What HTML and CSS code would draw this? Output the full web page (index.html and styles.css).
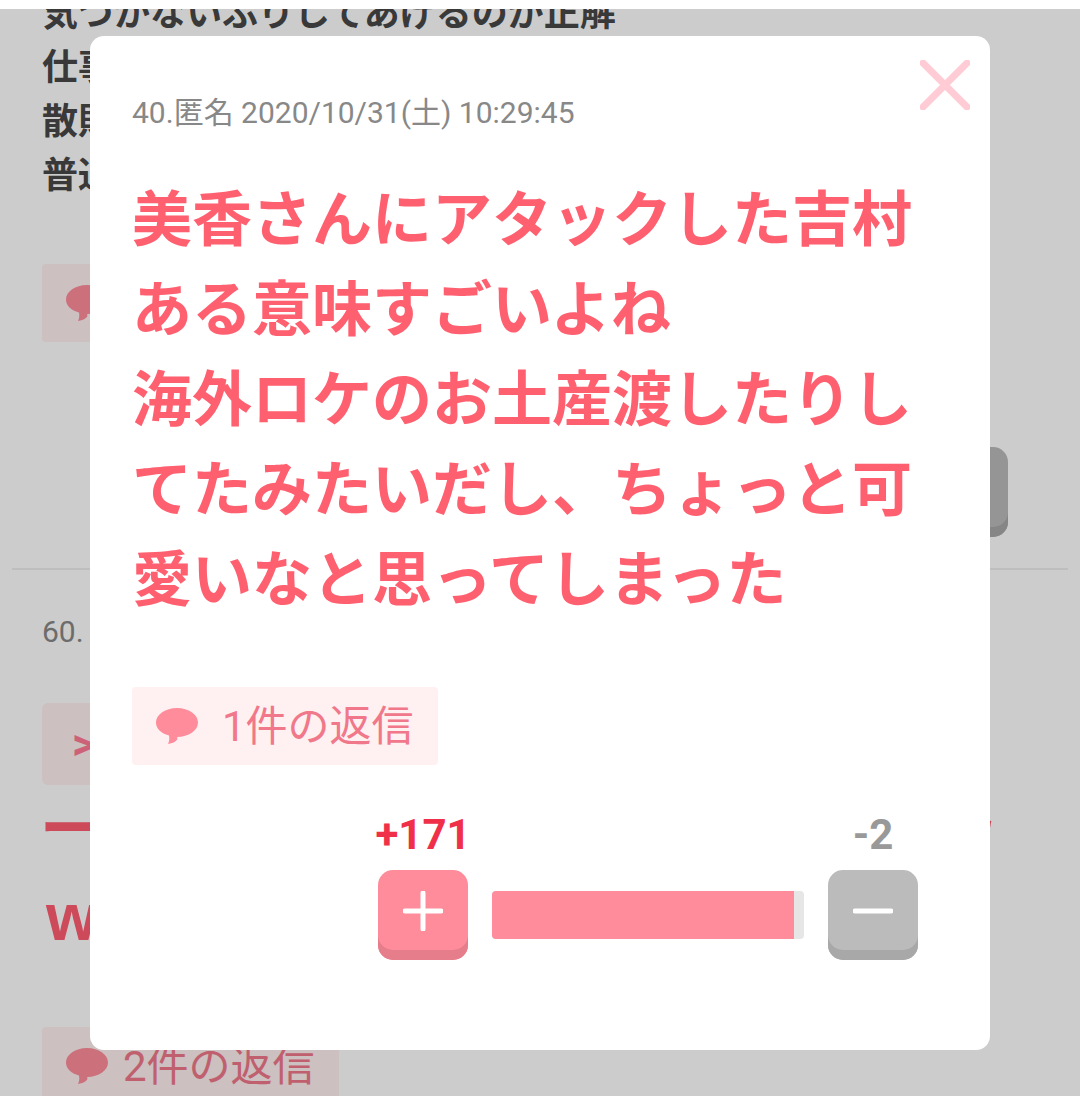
FILE: index.html
```html
<!DOCTYPE html>
<html lang="ja">
<head>
    <meta charset="UTF-8">
    <meta name="viewport" content="width=device-width, initial-scale=1.0">
    <title>コメント</title>
    <link rel="stylesheet" href="styles.css">
</head>
<body>
    <div class="top-bar"></div>

    <div class="main">
        <div class="page">
            <div class="comment first-comment">
                <p class="comment-text">気づかないふりしてあげるのが正解<br>仕事<br>散財<br>普通</p>
                <div class="reply-chip">
                    <svg class="bubble" viewBox="0 0 42 36"><path d="M21 0C32.6 0 42 6.500 42 14.500C42 22.500 32.600 29 21 29C23 32 18 35 12 36C13.500 33 13.500 30 13 27.500C5 25.500 0 20.500 0 14.500C0 6.500 9.400 0 21 0Z"/></svg>
                    <span>1件の返信</span>
                </div>
                <div class="votes">
                    <div class="vote">
                        <div class="vote-count minus-count">-4</div>
                        <div class="vote-btn minus-btn"></div>
                    </div>
                </div>
            </div>

            <div class="comment second-comment">
                <div class="comment-meta">60. 匿名 2020/10/31(土) 10:41:02</div>
                <div class="quote-chip">&gt;&gt;40</div>
                <p class="comment-text red-text">ーーーーーーーーーーーーーーーゥ<br><b class="latin">w</b></p>
                <div class="reply-chip">
                    <svg class="bubble" viewBox="0 0 42 36"><path d="M21 0C32.6 0 42 6.500 42 14.500C42 22.500 32.600 29 21 29C23 32 18 35 12 36C13.500 33 13.500 30 13 27.500C5 25.500 0 20.500 0 14.500C0 6.500 9.400 0 21 0Z"/></svg>
                    <span>2件の返信</span>
                </div>
            </div>
        </div>

        <div class="overlay"></div>

        <div class="modal">
            <svg class="close-btn" viewBox="0 0 50 50"><path d="M3 3L47 47M47 3L3 47"/></svg>
            <div class="comment-meta">40.匿名 2020/10/31(土) 10:29:45</div>
            <p class="modal-text">美香さんにアタックした吉村<br>ある意味すごいよね<br>海外ロケのお土産渡したりし<br>てたみたいだし、ちょっと可<br>愛いなと思ってしまった</p>
            <div class="reply-chip">
                <svg class="bubble" viewBox="0 0 42 36"><path d="M21 0C32.6 0 42 6.500 42 14.500C42 22.500 32.600 29 21 29C23 32 18 35 12 36C13.500 33 13.500 30 13 27.500C5 25.500 0 20.500 0 14.500C0 6.500 9.400 0 21 0Z"/></svg>
                <span>1件の返信</span>
            </div>
            <div class="votes">
                <div class="vote">
                    <div class="vote-count plus-count">+171</div>
                    <div class="vote-btn plus-btn">
                        <svg viewBox="0 0 40 40"><path d="M20 2V38M2 20H38"/></svg>
                    </div>
                </div>
                <div class="vote-bar">
                    <div class="vote-fill" style="width: 96.8%"></div>
                </div>
                <div class="vote">
                    <div class="vote-count minus-count">-2</div>
                    <div class="vote-btn minus-btn">
                        <svg viewBox="0 0 40 40"><path d="M2 20H38"/></svg>
                    </div>
                </div>
            </div>
        </div>
    </div>
</body>
</html>
```

FILE: styles.css
```css
* {
    margin: 0;
    padding: 0;
    box-sizing: border-box;
}

body {
    font-family: Roboto, 'Noto Sans CJK JP', sans-serif;
    background: white;
    height: 1096px;
    overflow: hidden;
    display: flex;
    flex-direction: column;
}

.top-bar {
    height: 9px;
    background: white;
    flex-shrink: 0;
}

.main {
    flex: 1;
    position: relative;
    overflow: hidden;
}

.page {
    margin-top: -22px;
}

.comment {
    padding: 0 72px 0 42px;
}

.first-comment {
    height: 583px;
    border-bottom: 2px solid #eee;
    margin: 0 12px;
    padding: 0 60px 0 30px;
}

.second-comment {
    padding-top: 44px;
}

.comment-text {
    font-size: 36px;
    font-weight: bold;
    line-height: 54px;
    color: #484848;
    margin-bottom: 61px;
}

.comment-meta {
    font-size: 30px;
    line-height: 36px;
    color: #888;
}

.quote-chip {
    width: 300px;
    height: 82px;
    margin-top: 53px;
    padding-left: 30px;
    border-radius: 6px;
    background: #fff0f1;
    color: #ff7a95;
    font-size: 44px;
    font-weight: bold;
    line-height: 82px;
}

.red-text {
    font-size: 60px;
    line-height: 90px;
    color: #ff5d70;
    white-space: nowrap;
    margin-left: -2px;
    margin-bottom: 62px;
}

.latin {
    font-family: 'Liberation Sans', sans-serif;
    font-size: 66px;
    line-height: 60px;
    margin-left: 6px;
}

.reply-chip {
    display: inline-flex;
    align-items: center;
    gap: 15px;
    height: 78px;
    padding: 0 24px;
    border-radius: 4px;
    background: #fff0f1;
    color: #f0788a;
    font-size: 42px;
}

.reply-chip span {
    margin-bottom: 8px;
}

.bubble {
    width: 42px;
    height: 36px;
    fill: #ff8c9a;
}

.votes {
    display: flex;
    justify-content: flex-end;
    align-items: flex-end;
    gap: 24px;
    margin-top: 45px;
}

.vote {
    display: flex;
    flex-direction: column;
    align-items: center;
    width: 90px;
}

.vote-count {
    font-size: 42px;
    font-weight: bold;
    line-height: 50px;
    margin-bottom: 10px;
    white-space: nowrap;
}

.plus-count {
    color: #f03048;
}

.minus-count {
    color: #999;
}

.vote-btn {
    width: 90px;
    height: 90px;
    padding-bottom: 9px;
    border-radius: 15px;
    display: flex;
    align-items: center;
    justify-content: center;
}

.vote-btn svg {
    width: 40px;
    height: 40px;
    fill: none;
    stroke: white;
    stroke-width: 5;
    stroke-linecap: round;
}

.plus-btn {
    background: #ff8c9a;
    box-shadow: inset 0 -10px 0 #e67d8a;
}

.minus-btn {
    background: #bbb;
    box-shadow: inset 0 -10px 0 #a8a8a8;
}

.vote-bar {
    width: 312px;
    height: 48px;
    margin-bottom: 21px;
    border-radius: 4px;
    background: #e6e6e6;
    overflow: hidden;
}

.vote-fill {
    height: 100%;
    background: #ff8c9a;
}

.overlay {
    position: absolute;
    inset: 0;
    background: rgba(0,0,0,0.2);
}

.modal {
    position: absolute;
    top: 27px;
    left: 90px;
    width: 900px;
    height: 1014px;
    padding: 59px 72px 0 42px;
    border-radius: 14px;
    background: white;
}

.close-btn {
    position: absolute;
    top: 24px;
    right: 20px;
    width: 50px;
    height: 50px;
    fill: none;
    stroke: #ffccd5;
    stroke-width: 7;
    stroke-linecap: round;
}

.modal-text {
    margin-top: 45px;
    font-size: 60px;
    font-weight: bold;
    line-height: 90px;
    color: #ff6070;
    white-space: nowrap;
}

.modal .reply-chip {
    gap: 24px;
    margin-top: 61px;
}
```
